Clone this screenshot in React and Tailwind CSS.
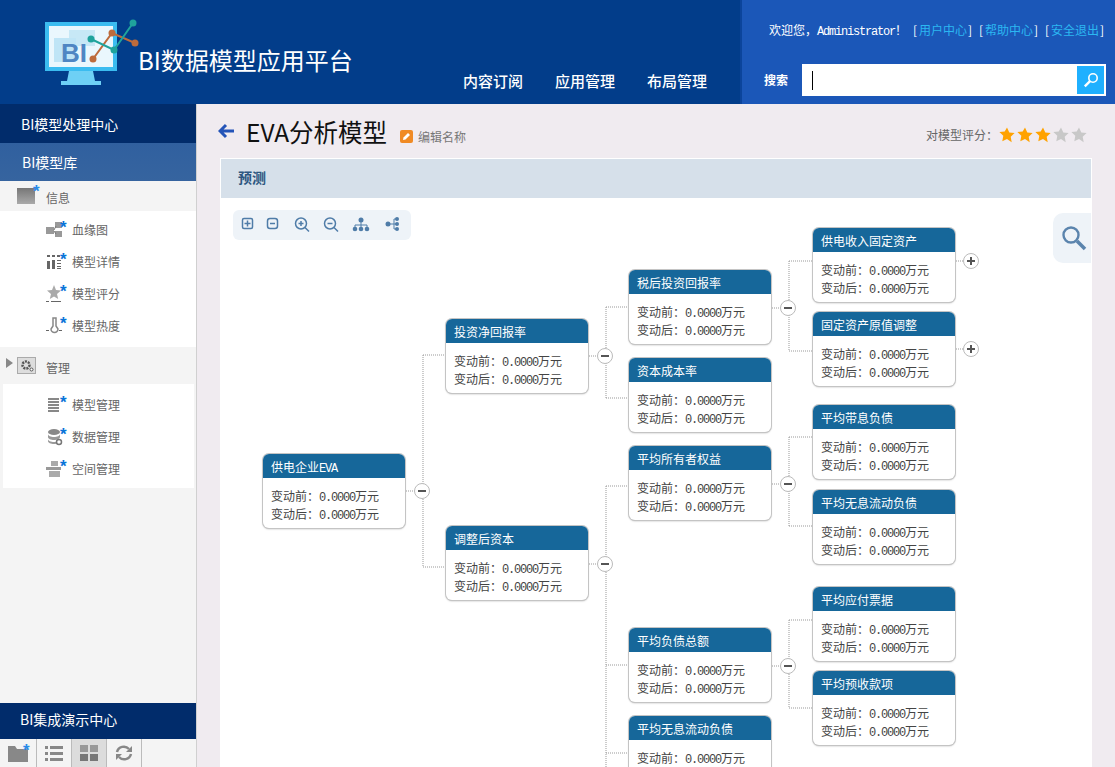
import React from 'react';

const CJK = "font-['Noto_Sans_CJK_SC','Liberation_Sans',sans-serif]";
const LATIN = "font-['Liberation_Mono',monospace] text-[12px] tracking-[-1.2px]";
const STAR = "font-['Liberation_Sans',sans-serif] text-[17px] leading-[17px] font-bold";

// canvas origin is the top left corner of the panel body (221, 198)
const OX = 221;
const OY = 198;

const nodes = [
  { x: 262, y: 453, title: '供电企业', suffix: 'EVA' },
  { x: 445, y: 318, title: '投资净回报率' },
  { x: 445, y: 525, title: '调整后资本' },
  { x: 628, y: 269, title: '税后投资回报率' },
  { x: 628, y: 357, title: '资本成本率' },
  { x: 628, y: 445, title: '平均所有者权益' },
  { x: 628, y: 627, title: '平均负债总额' },
  { x: 628, y: 715, title: '平均无息流动负债' },
  { x: 812, y: 227, title: '供电收入固定资产' },
  { x: 812, y: 311, title: '固定资产原值调整' },
  { x: 812, y: 404, title: '平均带息负债' },
  { x: 812, y: 489, title: '平均无息流动负债' },
  { x: 812, y: 586, title: '平均应付票据' },
  { x: 812, y: 670, title: '平均预收款项' },
];

const toggles = [
  { x: 422, y: 491, open: true },
  { x: 605, y: 356, open: true },
  { x: 605, y: 564, open: true },
  { x: 788, y: 308, open: true },
  { x: 788, y: 484, open: true },
  { x: 788, y: 666, open: true },
  { x: 971, y: 261, open: false },
  { x: 971, y: 349, open: false },
];

const links = [
  'M406 491H416',
  'M423 355V567M423 355H445M423 567H445',
  'M589 356H599',
  'M606 307V398M606 307H628M606 398H628',
  'M589 564H599',
  'M606 486V767M606 486H628M606 665H628M606 753H628',
  'M772 308H782',
  'M789 261V351M789 261H812M789 351H812',
  'M772 484H782',
  'M789 437V526M789 437H812M789 526H812',
  'M772 666H782',
  'M789 620V708M789 620H812M789 708H812',
  'M956 261H965',
  'M956 349H965',
];

const userLinks = ['用户中心', '帮助中心', '安全退出'];

function Value({ label }) {
  return (
    <div className="h-[18px] leading-[18px] whitespace-nowrap">
      {label}：<span className={LATIN}>0.0000</span>万元
    </div>
  );
}

function TreeNode({ node }) {
  return (
    <div
      className="absolute w-[142px] h-[74px] rounded-[6px] bg-white overflow-hidden shadow-[0_0_0_1px_#c4c4c4,0_1px_2px_#aaa] text-[12px] text-[#444]"
      style={{ left: node.x + 1 - OX, top: node.y + 1 - OY }}
    >
      <div className="h-[24px] bg-[#16679a] text-white text-[12px] leading-[26px] pl-[8px] whitespace-nowrap">
        {node.title}
        {node.suffix && <span className={LATIN}>{node.suffix}</span>}
      </div>
      <div className="pl-[8px] pt-[9px]">
        <Value label="变动前" />
        <Value label="变动后" />
      </div>
    </div>
  );
}

function Toggle({ item }) {
  return (
    <div
      className="absolute w-[16px] h-[16px] rounded-full bg-white border border-[#bbb] flex items-center justify-center"
      style={{ left: item.x - OX - 8, top: item.y - OY - 8 }}
    >
      <svg width="10" height="10" viewBox="0 0 10 10">
        <rect x="1" y="4" width="8" height="2" fill="#555" />
        {!item.open && <rect x="4" y="1" width="2" height="8" fill="#555" />}
      </svg>
    </div>
  );
}

function Star({ on }) {
  return (
    <svg width="18" height="18" viewBox="0 0 18 18">
      <path
        d="M9 1.500l2.300 4.900 5.300.7-3.900 3.700 1 5.400L9 12.900l-4.700 2.300 1-5.400-3.900-3.700 5.300-.7z"
        fill={on ? '#ffa200' : '#c8c8c8'}
      />
    </svg>
  );
}

function Logo() {
  return (
    <svg width="96" height="68" viewBox="0 0 96 68" className="shrink-0">
      <rect x="0" y="3" width="72" height="49" fill="#3bbcf0" />
      <rect x="4" y="7" width="64" height="41" fill="#eaf7fd" />
      <rect x="24" y="11" width="26" height="16" fill="#c7e8f6" />
      <rect x="9" y="19" width="22" height="24" fill="#bfe5f6" />
      <path d="M24 52h24l2 10h6v4H16v-4h6z" fill="#6ed0f5" />
      <text x="16" y="43" fontSize="26" fontWeight="700" fill="#4f86c3" fontFamily="Liberation Sans, sans-serif">BI</text>
      <path d="M48 40L67 14L90 24" stroke="#bd6b3c" strokeWidth="2" fill="none" />
      <path d="M46 20L69 31L88 4" stroke="#1fa39c" strokeWidth="2" fill="none" />
      <circle cx="48" cy="40" r="3.500" fill="#bd6b3c" />
      <circle cx="67" cy="14" r="3.500" fill="#bd6b3c" />
      <circle cx="90" cy="24" r="3.500" fill="#bd6b3c" />
      <circle cx="46" cy="20" r="3.500" fill="#1fa39c" />
      <circle cx="69" cy="31" r="3.500" fill="#1fa39c" />
      <circle cx="88" cy="4" r="3.500" fill="#1fa39c" />
    </svg>
  );
}

function Header() {
  return (
    <header className="h-[104px] flex bg-[#023d8a]">
      <div className="w-[740px] relative flex shrink-0">
        <div className="pl-[45px] pt-[19px]">
          <Logo />
        </div>
        <div className="pt-[40px] -ml-[3px] text-white text-[24px] leading-[40px] whitespace-nowrap">
          BI数据模型应用平台
        </div>
        <nav className="absolute left-[463px] top-[70px] flex gap-[32px] text-white text-[15px] leading-[22px] font-medium whitespace-nowrap">
          <span>内容订阅</span>
          <span>应用管理</span>
          <span>布局管理</span>
        </nav>
      </div>
      <div className="flex-1 bg-[#1b57b8] border-l-2 border-[#0b449b] pl-[27px]">
        <div className="h-[64px] pt-[21px] flex text-[12px] leading-[18px] text-white whitespace-nowrap">
          <span className="w-[144px] shrink-0">
            欢迎您，<span className={LATIN}>Administrator</span>！
          </span>
          {userLinks.map((text) => (
            <span key={text} className="w-[66px] shrink-0 flex">
              <span className="w-[6px]">[</span>
              <span className="text-[#2bb7f2]">{text}</span>
              <span className="w-[6px] pl-[1px]">]</span>
            </span>
          ))}
        </div>
        <div className="flex items-center">
          <span className="w-[38px] -ml-[5px] text-white text-[12px] font-bold">搜索</span>
          <div className="w-[304px] h-[32px] bg-white flex items-center justify-between pl-[10px] pr-[2px]">
            <span className="w-[1px] h-[19px] bg-black" />
            <div className="w-[27px] h-[28px] bg-[#1fb0ff] flex items-center justify-center">
              <svg width="16" height="16" viewBox="0 0 16 16" fill="none" stroke="#fff">
                <circle cx="10" cy="6" r="4.200" strokeWidth="1.600" />
                <path d="M7 9.200L1.800 14.400" strokeWidth="2.400" />
              </svg>
            </div>
          </div>
        </div>
      </div>
    </header>
  );
}

const icons = {
  lineage: (
    <g fill="#999">
      <rect x="0" y="6" width="8" height="7" />
      <rect x="9" y="1" width="7" height="6" />
      <rect x="9" y="10" width="7" height="6" />
      <path d="M8 9l2-4M8 10l2 3" stroke="#777" />
    </g>
  ),
  detail: (
    <g fill="#666">
      <rect x="1" y="2" width="3" height="2" />
      <rect x="6" y="2" width="3" height="2" />
      <rect x="11" y="2" width="3" height="2" />
      <rect x="1" y="8" width="3" height="8" />
      <rect x="6" y="7" width="3" height="9" />
      <path d="M11 7h4v1h-4zM11 10h4v1h-4zM11 13h4v1h-4zM11 15h4v1h-4z" />
    </g>
  ),
  star: (
    <g>
      <path d="M8 0l2 5 5 .5-4 3.500 1.200 5L8 11.500 3.800 14 5 9 1 5.500 6 5z" fill="#aaa" />
      <rect x="0" y="16" width="3" height="1" fill="#666" />
      <rect x="5" y="16" width="10" height="1" fill="#666" />
    </g>
  ),
  heat: (
    <g fill="none" stroke="#888">
      <path d="M7 1h3v8l2 3a3.500 3.500 0 11-7 0l2-3z" strokeWidth="1.500" />
      <rect x="0" y="13" width="3" height="1" fill="#666" stroke="none" />
      <rect x="13" y="13" width="3" height="1" fill="#666" stroke="none" />
    </g>
  ),
  model: (
    <g fill="#888">
      <rect x="2" y="2" width="11" height="2" />
      <rect x="2" y="5" width="11" height="2" />
      <rect x="2" y="8" width="11" height="2" />
      <rect x="2" y="11" width="11" height="2" />
      <rect x="2" y="14" width="11" height="2" />
    </g>
  ),
  data: (
    <g>
      <ellipse cx="8" cy="4" rx="6" ry="3" fill="#888" />
      <path d="M2 6c0 4 12 4 12 0v3c0 4-12 4-12 0zM2 11c0 4 12 4 12 0v2c0 4-12 4-12 0z" fill="#999" />
      <circle cx="13" cy="14" r="2.500" fill="#fff" stroke="#777" strokeWidth="1.500" />
    </g>
  ),
  space: (
    <g fill="#aaa">
      <rect x="5" y="1" width="7" height="5" />
      <rect x="0" y="7" width="15" height="3" fill="#999" />
      <rect x="3" y="11" width="11" height="6" />
    </g>
  ),
};

function SubItem({ icon, label, inset }) {
  return (
    <div className={`h-[32px] flex items-center text-[12px] text-[#666] ${inset ? 'pl-[43px]' : 'pl-[46px]'}`}>
      <span className="relative w-[26px] h-[18px] shrink-0">
        <svg width="17" height="18" viewBox="0 0 17 18">{icons[icon]}</svg>
        <span className={`absolute left-[14px] -top-[2px] text-[#0a74d8] ${STAR}`}>*</span>
      </span>
      {label}
    </div>
  );
}

function Sidebar() {
  return (
    <aside className="w-[197px] shrink-0 h-[663px] flex flex-col bg-[#f4f4f4] border-r border-[#d0d0d0] text-white text-[14px]">
      <div className="h-[39px] leading-[40px] pl-[21px] bg-[#012c6b]">BI模型处理中心</div>
      <div className="h-[38px] leading-[39px] pl-[22px] bg-gradient-to-b from-[#30609f] to-[#36649f]">BI模型库</div>
      <div className="h-[30px] flex items-center pl-[17px] text-[12px] text-[#666]">
        <span className="relative w-[29px] h-[16px] shrink-0">
          <span className="block w-[18px] h-[16px] bg-gradient-to-b from-[#777] to-[#aaa]" />
          <span className={`absolute left-[16px] -top-[5px] text-[#2a8be8] ${STAR}`}>*</span>
        </span>
        <span className="pt-[4px]">信息</span>
      </div>
      <div className="h-[136px] bg-white pt-[3px]">
        <SubItem icon="lineage" label="血缘图" />
        <SubItem icon="detail" label="模型详情" />
        <SubItem icon="star" label="模型评分" />
        <SubItem icon="heat" label="模型热度" />
      </div>
      <div className="h-[37px] flex items-center pl-[6px] text-[12px] text-[#666]">
        <span className="w-0 h-0 border-y-[5px] border-y-transparent border-l-[7px] border-l-[#888] -mt-[6px]" />
        <span className="ml-[4px] w-[19px] h-[17px] mr-[10px] bg-[#ddd] border border-[#aaa] flex items-center justify-center shrink-0">
          <svg width="14" height="13" viewBox="0 0 14 13">
            <circle cx="6" cy="6" r="3.500" fill="none" stroke="#555" strokeWidth="2.500" strokeDasharray="2 1" />
            <circle cx="11.500" cy="10.500" r="1.500" fill="#fff" stroke="#555" />
          </svg>
        </span>
        <span className="pt-[4px]">管理</span>
      </div>
      <div className="h-[104px] ml-[3px] mr-[2px] bg-white pt-[5px]">
        <SubItem icon="model" label="模型管理" inset />
        <SubItem icon="data" label="数据管理" inset />
        <SubItem icon="space" label="空间管理" inset />
      </div>
      <div className="mt-auto h-[36px] leading-[33px] pl-[20px] bg-[#012c6b]">BI集成演示中心</div>
      <div className="h-[28px] flex">
        <div className="w-[37px] border-r border-[#bbb] flex items-center justify-center relative">
          <svg width="20" height="17" viewBox="0 0 20 17">
            <path d="M0 1h7l2 3h11v13H0z" fill="#888" />
          </svg>
          <span className={`absolute left-[23px] top-[3px] text-[#2a8be8] ${STAR}`}>*</span>
        </div>
        <div className="w-[35px] border-r border-[#bbb] flex items-center justify-center">
          <svg width="18" height="16" viewBox="0 0 18 16" fill="#888">
            <rect x="0" y="1" width="3" height="3" />
            <rect x="5" y="1" width="13" height="3" />
            <rect x="0" y="7" width="3" height="3" />
            <rect x="5" y="7" width="13" height="3" />
            <rect x="0" y="13" width="3" height="3" />
            <rect x="5" y="13" width="13" height="3" />
          </svg>
        </div>
        <div className="w-[35px] border-r border-[#bbb] bg-[#dcdcdc] flex items-center justify-center">
          <svg width="18" height="16" viewBox="0 0 18 16">
            <rect x="0" y="0" width="8" height="7" fill="#999" />
            <rect x="10" y="0" width="8" height="7" fill="#999" />
            <rect x="0" y="9" width="8" height="7" fill="#777" />
            <rect x="10" y="9" width="8" height="7" fill="#777" />
          </svg>
        </div>
        <div className="w-[35px] border-r border-[#bbb] flex items-center justify-center">
          <svg width="20" height="18" viewBox="0 0 20 18" fill="none" stroke="#888" strokeWidth="2.500">
            <path d="M3 8a7 7 0 0112-3" />
            <path d="M17 10a7 7 0 01-12 3" />
            <path d="M18 2v6h-6z" fill="#888" stroke="none" />
            <path d="M2 16v-6h6z" fill="#888" stroke="none" />
          </svg>
        </div>
      </div>
    </aside>
  );
}

function ToolBar() {
  return (
    <div className="absolute left-[12px] top-[12px] w-[178px] h-[30px] rounded-[6px] bg-[#eef3f8] flex items-center pl-[8px]">
      <svg width="162" height="18" viewBox="0 0 162 18" fill="none" stroke="#4f7ca8" strokeWidth="1.500">
        <rect x="1.500" y="2.500" width="10" height="10" rx="1.500" />
        <path d="M3.500 7.500h6M6.500 4.500v6" />
        <rect x="26.500" y="2.500" width="10" height="10" rx="2.500" />
        <path d="M29 7.500h5" />
        <circle cx="60" cy="7.500" r="5.500" />
        <path d="M57.500 7.500h5M60 5v5M64 11.500l4 4" />
        <circle cx="89" cy="7.500" r="5.500" />
        <path d="M86.500 7.500h5M93 11.500l4 4" />
        <g fill="#4f7ca8" stroke="none">
          <circle cx="120" cy="4" r="2.500" />
          <circle cx="114" cy="13" r="2.300" />
          <circle cx="120" cy="13" r="2.300" />
          <circle cx="126" cy="13" r="2.300" />
        </g>
        <path d="M120 5v6M114 12V9h12v3" strokeWidth="1" />
        <g fill="#4f7ca8" stroke="none">
          <circle cx="147" cy="8" r="2.500" />
          <circle cx="156" cy="3" r="2" />
          <circle cx="156" cy="8" r="2" />
          <circle cx="156" cy="13" r="2" />
        </g>
        <path d="M147 8h9M153 3v10h3M153 3h3" strokeWidth="1" />
      </svg>
    </div>
  );
}

function TreeLinks() {
  return (
    <svg className="absolute left-0 top-0" width="871" height="569" viewBox={`${OX} ${OY} 871 569`}>
      {links.map((d, i) => (
        <path key={i} d={d} fill="none" stroke="#999" strokeDasharray="1 1" />
      ))}
    </svg>
  );
}

function Main() {
  return (
    <main className="flex-1 min-w-0 bg-[#f0ebf0] px-[23px]">
      <div className="h-[54px] flex items-start pt-[13px] -ml-[2px]">
        <svg width="16" height="16" viewBox="0 0 16 16" className="mt-[6px] shrink-0" fill="none" stroke="#2454b8" strokeWidth="3">
          <path d="M8 2L2 8l6 6M2 8h14" />
        </svg>
        <h1 className="ml-[12px] mt-[1px] text-[24.500px] leading-[28px] text-[#111] font-normal whitespace-nowrap">EVA分析模型</h1>
        <span className="ml-[13px] mt-[13px] w-[13px] h-[13px] rounded-[2px] bg-[#f08a24] flex items-center justify-center shrink-0">
          <svg width="9" height="9" viewBox="0 0 9 9"><path d="M1 8l.5-2.500L6 1l2 2-4.500 4.500z" fill="#fff" /></svg>
        </span>
        <span className="ml-[5px] mt-[12px] text-[12px] leading-[16px] text-[#777] whitespace-nowrap">编辑名称</span>
        <div className="ml-auto pr-[4px] flex items-center text-[12px] text-[#666] mt-[9px] whitespace-nowrap">
          对模型评分：
          <Star on />
          <Star on />
          <Star on />
          <Star />
          <Star />
        </div>
      </div>
      <section className="w-[872px] h-[609px] border-x border-t border-white bg-white overflow-hidden">
        <div className="h-[39px] bg-[#d6e0ea] pl-[17px] text-[14px] font-bold leading-[36px] text-[#2c5680]">预测</div>
        <div className="relative h-[569px] bg-white">
          <ToolBar />
          <div className="absolute right-0 top-[15px] w-[38px] h-[50px] bg-[#eef3f8] rounded-l-[10px] flex items-center justify-center pl-[3px]">
            <svg width="26" height="26" viewBox="0 0 26 26" fill="none" stroke="#5b84ad">
              <circle cx="10" cy="10" r="7.500" strokeWidth="2.400" />
              <path d="M16 16l8 8" strokeWidth="3.600" />
            </svg>
          </div>
          <TreeLinks />
          {nodes.map((node) => (
            <TreeNode key={`${node.x}-${node.y}`} node={node} />
          ))}
          {toggles.map((item) => (
            <Toggle key={`${item.x}-${item.y}`} item={item} />
          ))}
        </div>
      </section>
    </main>
  );
}

export default function App() {
  return (
    <div className={`w-[1115px] h-[767px] overflow-hidden ${CJK}`}>
      <Header />
      <div className="flex">
        <Sidebar />
        <Main />
      </div>
    </div>
  );
}
